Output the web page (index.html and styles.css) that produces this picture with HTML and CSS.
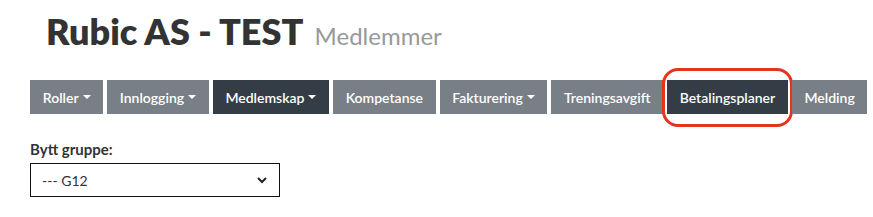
FILE: index.html
```html
<!DOCTYPE html>
<html lang="nb">
<head>
  <meta charset="UTF-8" />
  <title>Medlemmer - Rubic AS - TEST</title>
  <link rel="stylesheet" href="styles.css">
</head>
<body>
<header class="page-head">
  <h1>Rubic AS - TEST <small>Medlemmer</small></h1>
</header>
<nav class="tabs">
  <a href="#" class="tab">Roller <span class="caret"></span></a>
  <a href="#" class="tab">Innlogging <span class="caret"></span></a>
  <a href="#" class="tab active">Medlemskap <span class="caret"></span></a>
  <a href="#" class="tab">Kompetanse</a>
  <a href="#" class="tab">Fakturering <span class="caret"></span></a>
  <a href="#" class="tab">Treningsavgift</a>
  <a href="#" class="tab active marked">Betalingsplaner</a>
  <a href="#" class="tab">Melding</a>
</nav>
<section class="group-form">
  <label for="gruppe">Bytt gruppe:</label>
  <div class="select">
    <span>--- G12</span>
    <svg width="12" height="8" viewBox="0 0 12 8"><path d="M2 2 L6 6 L10 2" fill="none" stroke="#222" stroke-width="2"/></svg>
  </div>
</section>
</body>
</html>
```

FILE: styles.css
```css
body {
  margin: 0;
  font-family: Lato, "Open Sans", sans-serif;
  color: #333;
  background: #fff;
}
.page-head {
  padding: 10px 0 0 46px;
}
h1 {
  margin: 0;
  font-size: 36px;
  font-weight: 800;
  color: #333;
  line-height: 42px;
}
h1 small {
  font-size: 24px;
  font-weight: 400;
  color: #999;
  margin-left: 4px;
}
.tabs {
  display: flex;
  gap: 4px;
  margin: 23px 0 0 30px;
}
.tab {
  position: relative;
  display: flex;
  align-items: center;
  gap: 4px;
  height: 34px;
  padding: 0 12.5px 0 12.75px;
  background: #787f86;
  color: #fff;
  text-decoration: none;
  font-size: 14px;
  font-weight: 600;
}
.tab.active {
  background: #343d46;
}
.caret {
  width: 0;
  height: 0;
  border-left: 4px solid transparent;
  border-right: 4px solid transparent;
  border-top: 4px solid #fff;
}
.marked::after {
  content: "";
  position: absolute;
  left: -5px;
  right: -5px;
  top: -12px;
  bottom: -13px;
  border: 3px solid #e8331c;
  border-radius: 16px;
}
.group-form {
  margin: 26px 0 0 30px;
}
.group-form label {
  display: block;
  font-size: 15px;
  font-weight: 700;
  color: #333;
  margin-bottom: 5px;
}
.select {
  display: flex;
  align-items: center;
  justify-content: space-between;
  padding: 0 11px;
  box-sizing: border-box;
  width: 250px;
  height: 34px;
  border: 1px solid #111;
  font-size: 14px;
  color: #333;
}
```
